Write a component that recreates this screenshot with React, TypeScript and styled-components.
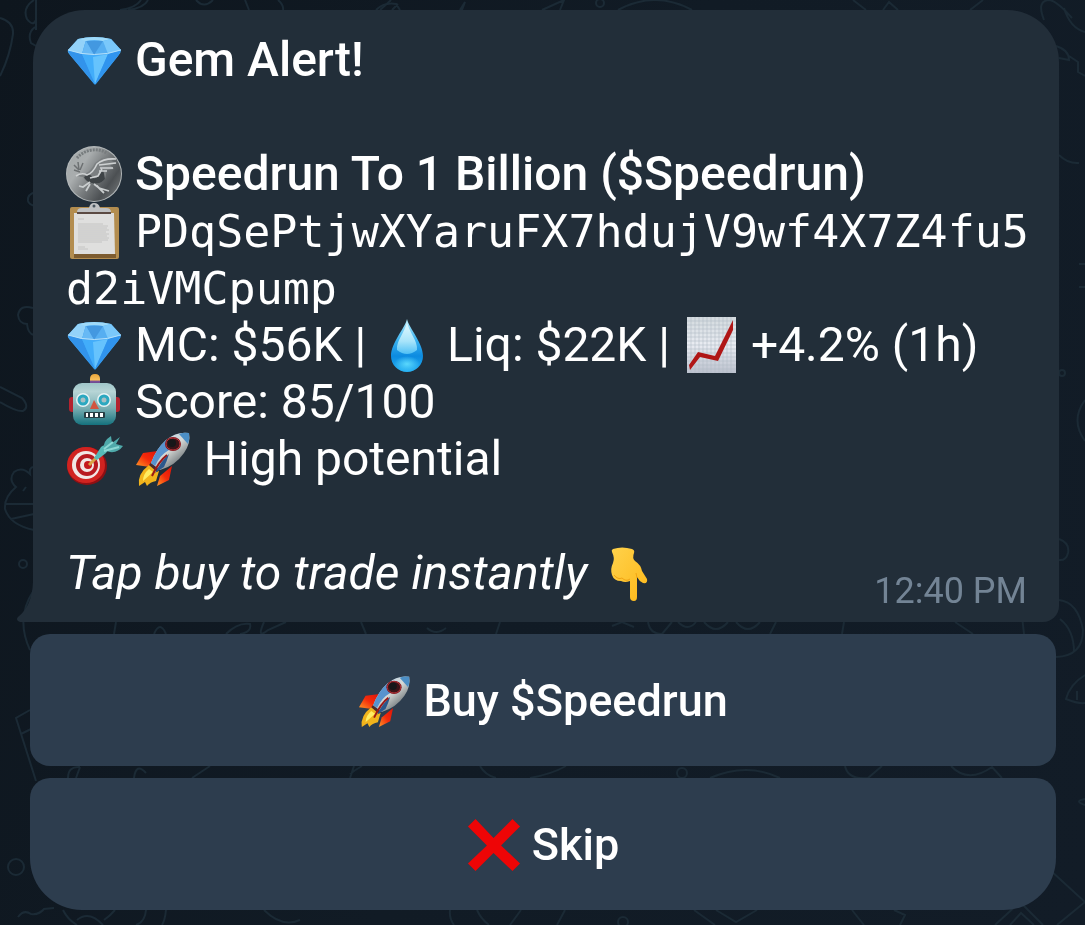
import React from 'react';

import styled, { createGlobalStyle } from 'styled-components';

const Gem = () => (
  <Emoji viewBox="0 0 57 57" role="img" aria-label="gem">
    <defs>
      <linearGradient id="gemBody" x1="0" y1="0" x2="0" y2="1">
        <stop offset="0" stopColor="#52b4f8" />
        <stop offset="1" stopColor="#2f9cf4" />
      </linearGradient>
    </defs>
    <path
      d="M12 8 Q28 4 45 8 L55 19 Q55 22 52 25 L30 53 Q29 54 28 53 L4 24 Q1 21 2 19 Z"
      fill="url(#gemBody)"
    />
    <path d="M12 8 L20 9 L16 23 L2 19 Z" fill="#93d2f9" />
    <path d="M20 9 Q28 7 37 9 L42 23 Q29 26 16 23 Z" fill="#56aef1" />
    <path d="M12 8 Q28 4 45 8 L37 10 Q28 8 20 10 Z" fill="#9fdaf9" />
    <path d="M37 10 L45 8 L55 19 L42 23 Z" fill="#7ac8fb" />
    <path d="M20 10 L28 24 L37 10 Z" fill="#4398e0" />
    <path d="M20 10 L16 23 L28 24 Z" fill="#67b9f5" />
    <path d="M2 19 L16 23 L29 53 L4 24 Z" fill="#3293eb" />
    <path d="M16 23 Q29 26 42 23 L29 53 Z" fill="#42adfa" />
    <path d="M27 26 L42 23 L29 53 Z" fill="#66c3fd" />
    <path d="M55 19 L42 23 L29 53 L52 25 Z" fill="#3094ee" />
    <path
      d="M2 19 Q28 28 55 19"
      fill="none"
      stroke="#b4e0fa"
      strokeWidth="1"
    />
  </Emoji>
);

const Coin = () => (
  <Emoji viewBox="0 0 57 57" role="img" aria-label="coin">
    <defs>
      <linearGradient id="coinFace" x1="0" y1="0.1" x2="1" y2="0.8">
        <stop offset="0" stopColor="#a4a9aa" />
        <stop offset="0.3" stopColor="#a9adae" />
        <stop offset="0.55" stopColor="#777b7d" />
        <stop offset="0.8" stopColor="#4c5053" />
        <stop offset="1" stopColor="#6e7274" />
      </linearGradient>
    </defs>
    <circle cx="28" cy="29" r="28" fill="#b3b8b9" />
    <circle cx="28" cy="29" r="27" fill="url(#coinFace)" />
    <path
      d="M11 13 A24 24 0 0 1 41 8"
      fill="none"
      stroke="#777c7e"
      strokeWidth="3"
      strokeDasharray="2 1"
    />
    <path
      d="M8 20 l5 5 M12 17 l1 8 M17 18 l-3 7 M8 25 l6 2"
      stroke="#6c7072"
      strokeWidth="1.5"
    />
    <path
      d="M10 31 Q14 27 19 29 Q25 26 29 18 L36 13 Q43 12 50 13 L45 16 L51 18 L44 20 L48 24 L41 25 L39 34 Q34 40 26 38 Q19 37 17 32 Z"
      fill="#7b7f81"
    />
    <path
      d="M18 32 Q24 27 27 33 Q32 35 37 24 L39 34 Q34 40 26 38 Q20 37 18 32 Z"
      fill="#3e4346"
    />
    <path
      d="M10 31 Q16 27 21 30 Q27 28 31 19 Q38 13 50 14 M33 20 L50 18 M34 23 L47 23 M33 26 L41 26 M24 33 L32 31 L36 24"
      fill="none"
      stroke="#ced1d2"
      strokeWidth="1.6"
    />
    <path
      d="M24 37 L17 42 L13 41 M24 39 L20 46 M28 39 L33 43 L43 46 M31 41 L38 48"
      fill="none"
      stroke="#c9cdce"
      strokeWidth="1.8"
    />
  </Emoji>
);

const Clipboard = () => (
  <Emoji viewBox="0 0 57 57" role="img" aria-label="clipboard">
    <rect x="4" y="5" width="49" height="52" rx="2" fill="#b38d4f" />
    <rect x="8" y="52" width="42" height="4" fill="#7d5c30" />
    <path d="M8 11 H48 L49 52 H8 Z" fill="#dfdfde" />
    <path
      d="M12 17 h6 M12 22 h25 M12 24 h30 M12 26 h29 M12 28 h31 M12 30 h28 M12 32 h31 M12 34 h29 M12 36 h31 M12 38 h30 M12 40 h24 M12 45 h7 M12 47 h10"
      stroke="#c4c4c3"
    />
    <path
      d="M11 10 Q11 6 16 6 H23 Q24 1 28 1 Q33 1 34 6 H40 Q45 6 45 10 Z"
      fill="#bfc1c3"
    />
    <rect x="11" y="10" width="34" height="2" fill="#5b4a43" />
    <circle cx="28" cy="4" r="1.5" fill="#46535d" />
  </Emoji>
);

const Droplet = () => (
  <Emoji viewBox="0 0 57 57" role="img" aria-label="droplet">
    <defs>
      <linearGradient id="dropBody" x1="0" y1="0" x2="0" y2="1">
        <stop offset="0" stopColor="#b9edfb" />
        <stop offset="0.4" stopColor="#3ab2f0" />
        <stop offset="0.7" stopColor="#0c8be0" />
        <stop offset="1" stopColor="#25b0f3" />
      </linearGradient>
      <linearGradient id="dropShine" x1="0" y1="0" x2="0" y2="1">
        <stop offset="0" stopColor="#e6fbff" />
        <stop offset="0.6" stopColor="#a8e4fa" />
        <stop offset="1" stopColor="#4fc0f5" />
      </linearGradient>
      <radialGradient id="dropGlow">
        <stop offset="0" stopColor="#5ad8fd" />
        <stop offset="1" stopColor="#5ad8fd" stopOpacity="0" />
      </radialGradient>
    </defs>
    <path
      d="M29 3 C31 12 45 27 45 40 A16 16 0 0 1 13 40 C13 27 27 12 29 3 Z"
      fill="url(#dropBody)"
    />
    <path
      d="M29 6 C31 16 40 25 39 34 Q29 42 19 34 C18 25 27 16 29 6 Z"
      fill="url(#dropShine)"
    />
    <ellipse cx="29" cy="48" rx="13" ry="8" fill="url(#dropGlow)" />
  </Emoji>
);

const Chart = () => (
  <Emoji viewBox="0 0 57 57" role="img" aria-label="chart going up">
    <defs>
      <linearGradient id="chartPaper" x1="0" y1="0" x2="0" y2="1">
        <stop offset="0" stopColor="#d3dade" />
        <stop offset="0.5" stopColor="#e9ecf2" />
        <stop offset="1" stopColor="#bcc2ce" />
      </linearGradient>
    </defs>
    <rect x="5" y="1" width="49" height="56" fill="url(#chartPaper)" />
    <path
      d="M9 1 V57 M13 1 V57 M17 1 V57 M21 1 V57 M25 1 V57 M29 1 V57 M33 1 V57 M37 1 V57 M41 1 V57 M45 1 V57 M49 1 V57 M5 5 H54 M5 9 H54 M5 13 H54 M5 17 H54 M5 21 H54 M5 25 H54 M5 29 H54 M5 33 H54 M5 37 H54 M5 41 H54 M5 45 H54 M5 49 H54 M5 53 H54"
      stroke="#b3bcc8"
      strokeWidth="0.6"
    />
    <path
      d="M7 49 L16 36 L33 40 L51 4 V14 L36 45 L18 41 L8 54 Z"
      fill="#b01616"
    />
  </Emoji>
);

const Robot = () => (
  <Emoji viewBox="0 0 57 57" role="img" aria-label="robot">
    <defs>
      <linearGradient id="robotHead" x1="0" y1="0" x2="0" y2="1">
        <stop offset="0" stopColor="#9fc6c9" />
        <stop offset="0.2" stopColor="#b7d5d6" />
        <stop offset="0.6" stopColor="#79aeb2" />
        <stop offset="1" stopColor="#14717d" />
      </linearGradient>
      <linearGradient id="robotBulb" x1="0" y1="0" x2="0" y2="1">
        <stop offset="0" stopColor="#e9a53b" />
        <stop offset="0.5" stopColor="#f7bf5c" />
        <stop offset="0.6" stopColor="#7c5199" />
        <stop offset="1" stopColor="#573c86" />
      </linearGradient>
    </defs>
    <path d="M24 13 V6 Q24 1 29 1 Q34 1 34 6 V13 Z" fill="url(#robotBulb)" />
    <rect x="3" y="24" width="7" height="15" rx="3" fill="#b3232f" />
    <rect x="47" y="24" width="7" height="15" rx="3" fill="#b3232f" />
    <rect
      x="7"
      y="10"
      width="43"
      height="42"
      rx="9"
      fill="url(#robotHead)"
    />
    <circle cx="17" cy="27" r="7" fill="#e9f4f5" />
    <circle cx="38" cy="27" r="7" fill="#e9f4f5" />
    <circle
      cx="17"
      cy="27"
      r="4"
      fill="#a9bfc3"
      stroke="#2ba8c0"
      strokeWidth="3"
    />
    <circle
      cx="38"
      cy="27"
      r="4"
      fill="#a9bfc3"
      stroke="#2ba8c0"
      strokeWidth="3"
    />
    <path d="M28 27 L33 36 H24 Z" fill="#d2543f" />
    <rect x="18" y="39" width="21" height="6" rx="1" fill="#263c42" />
    <path
      d="M20 40 h2 v4 h-2z M24 40 h3 v4 h-3z M29 40 h3 v4 h-3z M34 40 h3 v4 h-3z"
      fill="#fff"
    />
  </Emoji>
);

const Target = () => (
  <Emoji viewBox="0 0 57 57" role="img" aria-label="target">
    <ellipse cx="21" cy="36" rx="20" ry="19" fill="#8f0f13" />
    <ellipse cx="20" cy="35" rx="19" ry="18" fill="#d12320" />
    <circle cx="20" cy="35" r="14" fill="#f1e7e5" />
    <circle cx="21" cy="35" r="11" fill="#b81a20" />
    <circle cx="21" cy="35" r="7" fill="#f1e7e5" />
    <circle cx="22" cy="35" r="4" fill="#c5191d" />
    <path d="M23 35 L34 24" stroke="#d9a345" strokeWidth="3" />
    <path
      d="M28 28 L35 17 Q38 14 41 16 Q43 19 40 23 L31 30 Z"
      fill="#57b9b7"
    />
    <path
      d="M38 18 Q37 11 45 6 L46 13 L54 7 L50 14 L57 16 Q52 23 44 22 L40 21 Z"
      fill="#4fa9aa"
    />
    <path d="M38 19 L47 12 M38 21 L53 17" stroke="#8bd8d4" strokeWidth="2" />
  </Emoji>
);

const Rocket = () => (
  <Emoji viewBox="0 -2 57 57" role="img" aria-label="rocket">
    <defs>
      <linearGradient id="rocketBody" x1="0.2" y1="0.1" x2="0.8" y2="0.8">
        <stop offset="0" stopColor="#b9d6ec" />
        <stop offset="0.5" stopColor="#d6d9d6" />
        <stop offset="1" stopColor="#6b7377" />
      </linearGradient>
      <linearGradient id="rocketFin" x1="1" y1="0" x2="0" y2="1">
        <stop offset="0" stopColor="#dd1408" />
        <stop offset="0.5" stopColor="#f42b0b" />
        <stop offset="1" stopColor="#ff9a26" />
      </linearGradient>
    </defs>
    <path d="M8 21 L23 19 L15 35 L1 33 Z" fill="url(#rocketFin)" />
    <path d="M25 44 L37 34 L34 48 L22 54 Z" fill="url(#rocketFin)" />
    <path
      d="M14 33 L24 39 L21 49 Q15 50 12 54 L10 50 L4 54 Q2 42 14 33 Z"
      fill="#f2b41c"
    />
    <path d="M14 37 L18 40 L8 49 Q8 42 14 37 Z" fill="#ffed62" />
    <path d="M14 33 L18 28 L28 36 L22 40 Z" fill="#4b2b2b" />
    <path
      d="M54 1 Q42 -1 31 8 Q21 17 16 31 L25 38 Q40 34 49 21 Q56 11 54 1 Z"
      fill="url(#rocketBody)"
    />
    <path d="M54 1 Q49 0 44 2 L53 12 Q55 7 54 1 Z" fill="#4c8fc5" />
    <path d="M31 8 Q21 17 16 31 L20 34 Q25 23 34 18 Z" fill="#5893ce" />
    <path d="M34 22 Q26 29 20 41 L29 35 Q32 29 34 22 Z" fill="#2b588d" />
    <path
      d="M32 23 Q24 29 17 44"
      fill="none"
      stroke="#9c1717"
      strokeWidth="2"
    />
    <ellipse cx="38" cy="12" rx="8" ry="7" fill="#7b1018" />
    <ellipse
      cx="38"
      cy="12"
      rx="7"
      ry="6"
      fill="#3a1418"
      stroke="#b63438"
      strokeWidth="1"
    />
    <circle cx="37" cy="11" r="4" fill="#171719" />
  </Emoji>
);

const PointDown = () => (
  <Emoji viewBox="-3 0 57 57" role="img" aria-label="pointing down">
    <defs>
      <linearGradient id="handSkin" x1="0" y1="0" x2="1" y2="1">
        <stop offset="0" stopColor="#ffd24b" />
        <stop offset="1" stopColor="#fdb819" />
      </linearGradient>
    </defs>
    <path
      d="M11 5 Q20 2 30 5 Q33 6 32 9 Q30 14 33 17 Q39 21 40 27 L45 35 Q46 40 41 39 Q37 37 35 33 V53 Q35 57 32 57 Q28 57 28 53 V37 Q23 39 19 37 Q12 37 10 31 Q8 25 11 19 Q13 14 10 8 Q9 6 11 5 Z"
      fill="url(#handSkin)"
    />
    <path
      d="M12 31 Q16 36 20 34 Q24 38 28 35 M34 29 L35 34"
      fill="none"
      stroke="#f0a414"
      strokeWidth="1"
    />
  </Emoji>
);

const Cross = () => (
  <Emoji viewBox="0 0 57 57" role="img" aria-label="cross mark">
    <path
      d="M9 1 L28 21 L48 1 L56 9 L36 29 L56 48 L48 56 L28 37 L9 56 L1 48 L21 29 L1 9 Z"
      fill="#ee0506"
    />
  </Emoji>
);

const Doodles = () => (
  <Wallpaper
    viewBox="0 0 1085 925"
    preserveAspectRatio="xMidYMid slice"
    aria-hidden="true"
  >
    <g fill="none" stroke="#1b2a35" strokeWidth="2">
      <path d="M0 18 Q14 22 13 34 Q10 56 0 76" />
      <path d="M34 0 Q22 8 27 19 Q33 27 36 20 M35 27 Q27 33 31 43 L38 47 M36 0 V30" />
      <path d="M148 0 Q144 8 128 10 M141 0 Q136 8 120 10" />
      <path d="M196 0 Q204 9 213 0 M245 0 L249 10 M278 0 Q284 5 283 10 M391 0 L380 10" />
      <path d="M376 10 Q384 2 396 4 L400 10 M392 10 L398 4 M460 10 L465 2 L462 10 M542 10 L564 0 L560 10" />
      <path d="M618 10 Q655 -10 692 10 M853 0 L866 10 M883 10 L889 2 L898 10 M970 10 L983 0" />
      <circle cx="600" cy="3" r="4" />
      <path d="M1044 20 Q1036 0 1050 0 Q1058 2 1072 18 M1064 8 Q1070 28 1085 32 M1056 46 Q1069 50 1069 60 L1059 58 M1069 56 L1078 62 V72 L1085 76" />
      <path d="M1059 155 Q1068 164 1079 163 M1079 264 H1085 M1079 287 H1085" />
      <circle cx="1062" cy="373" r="3" />
      <path d="M1085 400 Q1070 420 1085 441 M1059 539 Q1070 543 1068 553 Q1066 561 1059 560" />
      <path d="M1059 600 Q1078 602 1083 630 Q1083 656 1056 657 M1060 619 Q1074 630 1074 652 M1022 616 L1024 634" />
      <path d="M1085 675 Q1070 684 1066 699 Q1078 704 1085 703 M1077 691 V700 M1085 799 Q1073 801 1085 805" />
      <path d="M33 308 Q20 304 18 315 Q19 324 27 324 Q28 334 34 335" />
      <path d="M0 387 L22 398 Q30 407 23 411 Q17 412 0 402" />
      <path d="M34 467 Q29 467 30 474 Q22 466 14 472 Q8 480 16 487 Q4 497 5 509 Q10 525 34 530 M6 504 H34 M11 519 L34 514 M23 491 L26 487" />
      <path d="M36 192 Q27 194 28 201 Q29 205 36 206" />
      <circle cx="23" cy="564" r="4" />
      <path d="M34 590 Q15 618 30 650 M116 622 L114 634 M154 634 Q160 620 166 634 M226 634 Q238 622 250 624 Q252 632 240 634 M264 622 Q256 640 268 630 L286 622" />
      <path d="M361 622 L366 634 M427 628 Q436 636 446 628 M500 622 L496 634 M612 626 L622 622 L634 627" />
      <path d="M648 622 Q650 634 662 634 L672 622 M678 622 Q688 632 696 622 M704 622 Q716 636 728 622 M736 622 Q748 636 760 622 M776 622 L770 634 M844 622 L842 634 M955 622 L973 634" />
      <path d="M30 710 L16 718 L36 781 M21 734 L31 729 M68 778 Q68 766 80 767 M80 767 L76 778 M134 778 Q136 762 146 773 M192 778 L210 766" />
      <path d="M350 778 L354 766 M362 766 Q355 770 350 774 M480 766 Q485 775 496 778 M530 778 Q552 774 566 766 M710 778 Q747 762 780 778 M845 766 Q848 780 868 778 L882 766 M951 766 Q968 784 992 767 L1002 778" />
      <circle cx="682" cy="773" r="5" />
      <circle cx="16" cy="867" r="8" />
      <path d="M18 917 Q24 909 31 914 Q39 915 44 909 L54 908 M63 910 Q68 920 77 925 M77 920 Q89 910 103 925 M115 910 Q110 916 104 920 M146 910 Q145 922 136 925 M166 910 Q165 920 162 925 M264 910 Q282 928 300 920" />
      <path d="M450 910 Q449 918 454 925 M477 910 Q481 919 489 925 M521 910 L510 925 M565 910 L557 925 M694 910 L715 925 M716 910 L736 922 L757 910 M852 910 L864 925 M894 910 L905 915 L900 925" />
      <circle cx="623" cy="922" r="5" />
      <path d="M1050 870 L1085 902 L1057 925 M1015 902 L1030 888 M995 925 L1020 902 L1043 925 M1010 925 L1021 913 L1034 925" />
    </g>
  </Wallpaper>
);

const App = () => {
  return (
    <>
      <GlobalStyle />
      <Doodles />
      <Chat>
        <Message>
          <Tail viewBox="0 0 24 40" aria-hidden="true">
            <path
              d="M17 0 Q16 24 2 35 Q0 37 2 39 L4 40 H24 V0 Z"
              fill="#222e39"
            />
          </Tail>
          <Title>
            <Gem /> Gem Alert!
          </Title>
          <Details>
            <Strong>
              <Coin /> Speedrun To 1 Billion ($Speedrun)
            </Strong>
            <Line>
              <Clipboard />{' '}
              <Address>PDqSePtjwXYaruFX7hdujV9wf4X7Z4fu5d2iVMCpump</Address>
            </Line>
            <Line>
              <Gem /> MC: $56K | <Droplet /> Liq: $22K | <Chart /> +4.2% (1h)
            </Line>
            <Line>
              <Robot /> Score: 85/100
            </Line>
            <Line>
              <Target /> <Rocket /> High potential
            </Line>
          </Details>
          <MessageFooter>
            <Note>
              <em>Tap buy to trade instantly</em> <PointDown />
            </Note>
            <Time>12:40 PM</Time>
          </MessageFooter>
        </Message>
        <Actions>
          <ActionButton type="button">
            <Rocket /> Buy $Speedrun
          </ActionButton>
          <ActionButton type="button" $last>
            <Cross /> Skip
          </ActionButton>
        </Actions>
      </Chat>
    </>
  );
};

export default App;

const GlobalStyle = createGlobalStyle`
  * {
    box-sizing: border-box;
  }
  body {
    margin: 0;
    min-height: 100vh;
    background: linear-gradient(110deg, #0e161e 0%, #111b25 50%, #121c27 100%);
    font-family: Roboto, 'Liberation Sans', sans-serif;
    color: #ffffff;
  }
`;

const Wallpaper = styled.svg`
  position: fixed;
  top: 0;
  left: 0;
  width: 100%;
  height: 100%;
`;

const Chat = styled.main`
  position: relative;
  display: flex;
  flex-direction: column;
  gap: 12px;
  padding: 10px 26px 16px 30px;
`;

const Message = styled.article`
  position: relative;
  margin-left: 3px;
  padding: 21px 24px 10px 33px;
  background: #222e39;
  border-radius: 52px 52px 16px 0;
  font-size: 48px;
  line-height: 57px;
`;

const Tail = styled.svg`
  position: absolute;
  bottom: 0;
  left: -17px;
  width: 24px;
  height: 40px;
`;

const Emoji = styled.svg`
  width: 57px;
  height: 57px;
  vertical-align: top;
`;

const Title = styled.h1`
  margin: 0 0 57px;
  font-size: 48px;
  font-weight: 500;
`;

const Details = styled.div`
  margin-bottom: 57px;
`;

const Line = styled.p`
  margin: 0;
`;

const Strong = styled(Line)`
  font-weight: 500;
`;

const Address = styled.code`
  font-family: 'DejaVu Sans Mono', monospace;
  font-size: 45px;
  line-height: 1;
  word-break: break-all;
`;

const MessageFooter = styled.footer`
  display: flex;
  align-items: flex-end;
  justify-content: space-between;
  padding-right: 8px;
`;

const Note = styled.p`
  margin: 0;
  padding-bottom: 11px;
`;

const Time = styled.time`
  font-size: 36px;
  line-height: 42px;
  color: #738495;
`;

const Actions = styled.div`
  display: flex;
  flex-direction: column;
  gap: 12px;
  padding-right: 3px;
`;

const ActionButton = styled.button<{ $last?: boolean }>`
  height: 132px;
  padding: 2px 0 0;
  border: none;
  border-radius: ${(props) => (props.$last ? '20px 20px 52px 52px' : '20px')};
  background: #2d3d4e;
  color: #ffffff;
  font-family: inherit;
  font-size: 45px;
  font-weight: 500;
  line-height: 54px;
  cursor: pointer;

  ${Emoji} {
    width: 54px;
    height: 54px;
  }
`;
